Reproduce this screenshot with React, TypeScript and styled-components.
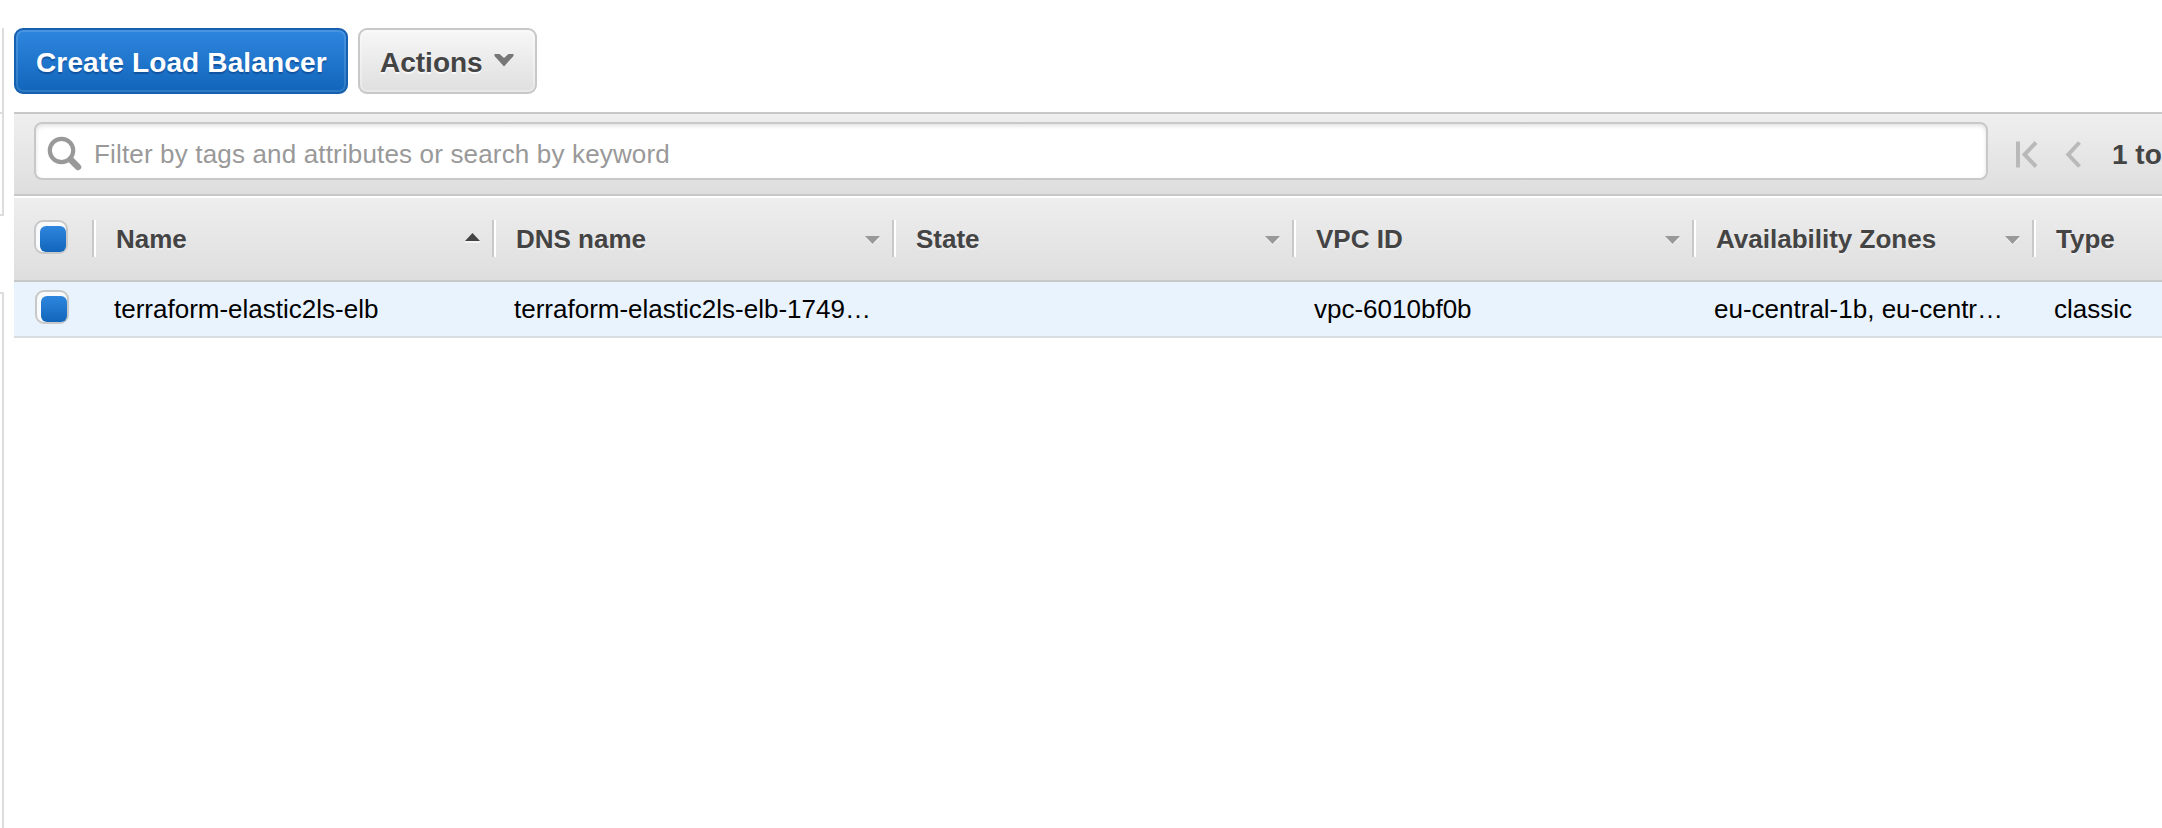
import React from "react";
import styled, { createGlobalStyle } from "styled-components";

const GlobalStyle = createGlobalStyle`
  * { box-sizing: border-box; }
  body {
    margin: 0;
    background: #fff;
    overflow: hidden;
    font-family: "Liberation Sans", Arial, Helvetica, sans-serif;
    font-size: 26px;
    color: #000;
  }
`;

const Page = styled.div`
  display: flex;
  gap: 10px;
  width: 100%;
  height: 100vh;
  padding-top: 28px;
  overflow: hidden;
`;

const SideRail = styled.aside`
  flex: none;
  display: flex;
  flex-direction: column;
  width: 4px;
`;

const RailPanel = styled.div<{ $height?: number; $top?: boolean; $bottom?: boolean }>`
  flex: ${(p) => (p.$height ? "none" : "1")};
  height: ${(p) => (p.$height ? `${p.$height}px` : "auto")};
  border: 0 solid #dcdcdc;
  border-right-width: 2px;
  border-top-width: ${(p) => (p.$top ? 2 : 0)}px;
  border-bottom-width: ${(p) => (p.$bottom ? 2 : 0)}px;
`;

const RailGap = styled.div`
  height: 76px;
`;

const Main = styled.main`
  flex: 1;
  min-width: 0;
`;

const ButtonBar = styled.div`
  display: flex;
  gap: 10px;
  height: 84px;
`;

const Button = styled.button<{ $primary?: boolean; $width: number }>`
  display: flex;
  align-items: center;
  width: ${(p) => p.$width}px;
  height: 66px;
  padding: 3px 20px 0;
  border: 2px solid ${(p) => (p.$primary ? "#1760b0" : "#c8c8c8")};
  border-radius: 9px;
  background: ${(p) =>
    p.$primary
      ? "linear-gradient(#2f86de, #1166bb)"
      : "linear-gradient(#f7f7f7, #dfdfdf)"};
  box-shadow: inset 0 0 0 2px
    ${(p) => (p.$primary ? "rgba(255,255,255,0.13)" : "rgba(255,255,255,0.3)")};
  color: ${(p) => (p.$primary ? "#fff" : "#444")};
  text-shadow: ${(p) => (p.$primary ? "0 2px 1px rgba(0,40,100,0.4)" : "0 2px 0 #f8f8f8")};
  font: bold 28px "Liberation Sans", Arial, sans-serif;
  letter-spacing: ${(p) => (p.$primary ? "0.14px" : "normal")};
  white-space: nowrap;
`;

const ActionsCaret = styled.svg`
  margin: -5px 0 0 11px;
`;

const Toolbar = styled.div`
  display: flex;
  align-items: flex-start;
  height: 84px;
  padding: 8px 0 0 20px;
  border-top: 2px solid #c8c8c8;
  border-bottom: 2px solid #c8c8c8;
  background: linear-gradient(#efefef, #dedede);
`;

const SearchBox = styled.label`
  flex: none;
  display: flex;
  align-items: center;
  width: 1954px;
  height: 58px;
  padding: 6px 11px 0;
  border: 2px solid #c8c8c8;
  border-radius: 8px;
  background: #fff;
  box-shadow: inset 0 2px 4px rgba(0, 0, 0, 0.12);
`;

const SearchInput = styled.input`
  flex: 1;
  min-width: 0;
  margin-left: 11px;
  padding: 0;
  border: 0;
  outline: 0;
  background: transparent;
  font: 26px "Liberation Sans", Arial, sans-serif;
  letter-spacing: 0.16px;
  &::placeholder { color: #999; opacity: 1; }
`;

const Pager = styled.div`
  display: flex;
  align-items: flex-start;
  padding: 19px 0 0 27px;
`;

const PagerIcon = styled.svg<{ $after: number }>`
  flex: none;
  margin-right: ${(p) => p.$after}px;
`;

const PagerText = styled.span`
  margin-top: -2px;
  color: #444;
  font-weight: bold;
  font-size: 28px;
  line-height: 32px;
  white-space: nowrap;
`;

const TableRow = styled.div`
  display: grid;
  grid-template-columns: 78px repeat(4, 400px) 340px 1fr;
`;

const HeaderRow = styled(TableRow)`
  height: 86px;
  padding-top: 22px;
  border-top: 2px solid #fff;
  border-bottom: 2px solid #c8c8c8;
  background: linear-gradient(#eee, #dedede);
  color: #444;
  font-weight: bold;
`;

const DataRow = styled(TableRow)`
  height: 56px;
  border-bottom: 2px solid #d8dde2;
  background: #e9f3fd;
`;

const HeaderCell = styled.div`
  display: flex;
  align-items: center;
  justify-content: space-between;
  height: 37px;
  padding: 0 12px 0 22px;
  border-left: 2px solid #c8c8c8;
  box-shadow: inset 2px 0 0 #fff;
  white-space: nowrap;
  text-shadow: 0 2px 0 rgba(255, 255, 255, 0.4);
`;

const HeaderLabel = styled.span`
  line-height: 34px;
`;

const Cell = styled.div`
  min-width: 0;
  padding-left: 22px;
  line-height: 54px;
  white-space: nowrap;
  overflow: hidden;
`;

const CheckCell = styled.div<{ $left: number; $top: number }>`
  padding: ${(p) => p.$top}px 0 0 ${(p) => p.$left}px;
`;

const Checkbox = styled.div`
  width: 34px;
  height: 34px;
  padding: 4px 0 0 4px;
  border: 2px solid #c8c8c8;
  border-radius: 9px;
  background: #f8fafb;
  &::after {
    content: "";
    display: block;
    width: 26px;
    height: 26px;
    border-radius: 6px;
    background: linear-gradient(#2f86de, #1166bb);
  }
`;

function SearchIcon() {
  return (
    <svg width="36" height="36" viewBox="0 0 36 36" fill="none" stroke="#999">
      <circle cx="14.5" cy="14.5" r="11.7" strokeWidth="4.2" />
      <path d="M23.5 23.5L31 31" strokeWidth="6.5" strokeLinecap="round" />
    </svg>
  );
}

function SortArrow({ up }: { up?: boolean }) {
  return (
    <svg width="15" height="12" viewBox="0 0 15 12">
      {up ? (
        <>
          <path d="M0 9H15" stroke="#f4f4f4" strokeWidth="2" />
          <path d="M0 8L7.5 0L15 8Z" fill="#444" />
        </>
      ) : (
        <>
          <path d="M1 5L7.5 12L15 5" fill="#f4f4f4" />
          <path d="M0 3H15L7.5 11Z" fill="#999" />
        </>
      )}
    </svg>
  );
}

const columns = [
  { title: "Name", sort: "up" },
  { title: "DNS name", sort: "down" },
  { title: "State", sort: "down" },
  { title: "VPC ID", sort: "down" },
  { title: "Availability Zones", sort: "down" },
  { title: "Type", sort: "" },
];

const values = [
  "terraform-elastic2ls-elb",
  "terraform-elastic2ls-elb-1749…",
  "",
  "vpc-6010bf0b",
  "eu-central-1b, eu-centr…",
  "classic",
];

export default function App() {
  return (
    <>
      <GlobalStyle />
      <Page>
        <SideRail>
          <RailPanel $height={86} $bottom />
          <RailPanel $height={102} $bottom />
          <RailGap />
          <RailPanel $top />
        </SideRail>
        <Main>
          <ButtonBar>
            <Button $primary $width={334}>Create Load Balancer</Button>
            <Button $width={179}>
              Actions
              <ActionsCaret width="20" height="14" viewBox="0 0 20 14">
                <defs>
                  <linearGradient id="caret" x1="0" y1="0" x2="0" y2="1">
                    <stop offset="0" stopColor="#777" />
                    <stop offset="0.4" stopColor="#777" />
                    <stop offset="1" stopColor="#777" />
                  </linearGradient>
                </defs>
                <path d="M0.5 1H5.5L10 5L14.5 1H19.5V3L10 13.5L0.5 3Z" fill="url(#caret)" />
              </ActionsCaret>
            </Button>
          </ButtonBar>
          <Toolbar>
            <SearchBox>
              <SearchIcon />
              <SearchInput placeholder="Filter by tags and attributes or search by keyword" />
            </SearchBox>
            <Pager>
              <PagerIcon $after={27} width="23" height="28" viewBox="0 0 23 28" fill="none" stroke="#b9b9b9">
                <path d="M3 0.5V26.5" strokeWidth="4" />
                <path d="M21 1.5L9.5 13.5L21 25.5" strokeWidth="4" />
              </PagerIcon>
              <PagerIcon $after={31} width="16" height="28" viewBox="0 0 16 28" fill="none" stroke="#b9b9b9">
                <path d="M14.5 1.5L3.3 13.5L14.5 25.5" strokeWidth="4" />
              </PagerIcon>
              <PagerText>1 to</PagerText>
            </Pager>
          </Toolbar>
          <HeaderRow>
            <CheckCell $left={20} $top={0}>
              <Checkbox />
            </CheckCell>
            {columns.map((c) => (
              <HeaderCell key={c.title}>
                <HeaderLabel>{c.title}</HeaderLabel>
                {c.sort && <SortArrow up={c.sort === "up"} />}
              </HeaderCell>
            ))}
          </HeaderRow>
          <DataRow>
            <CheckCell $left={21} $top={8}>
              <Checkbox />
            </CheckCell>
            {values.map((v, i) => (
              <Cell key={i}>{v}</Cell>
            ))}
          </DataRow>
        </Main>
      </Page>
    </>
  );
}
